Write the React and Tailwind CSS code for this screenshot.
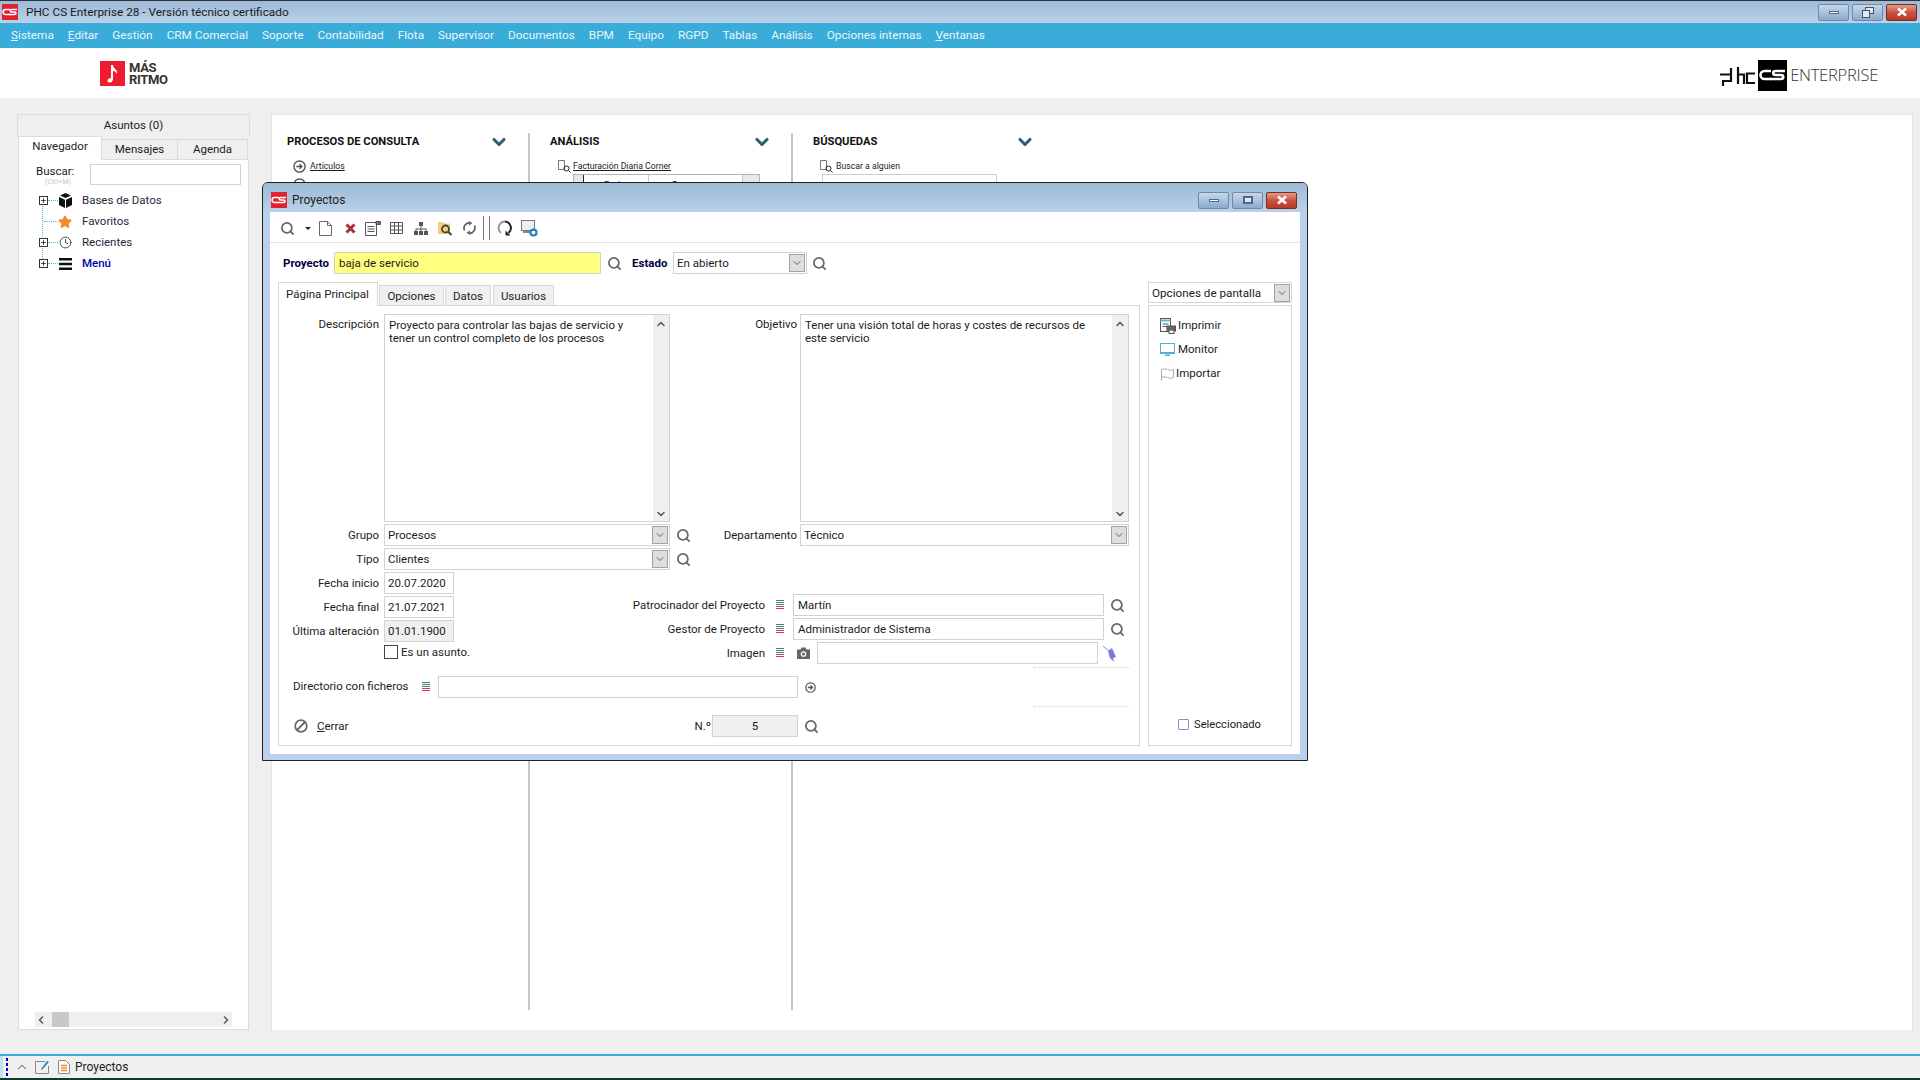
import { Star, Clock, Search, ChevronUp, ChevronDown, ChevronLeft, ChevronRight, Plus } from "lucide-react";

const menuItems = [
  ["S", "istema"],
  ["E", "ditar"],
  ["", "Gestión"],
  ["", "CRM Comercial"],
  ["", "Soporte"],
  ["", "Contabilidad"],
  ["", "Flota"],
  ["", "Supervisor"],
  ["", "Documentos"],
  ["", "BPM"],
  ["", "Equipo"],
  ["", "RGPD"],
  ["", "Tablas"],
  ["", "Análisis"],
  ["", "Opciones internas"],
  ["V", "entanas"],
];

const Lupa = () => <Search size={15} strokeWidth={2.8} color="#666666" className="shrink-0" />;

const CsLogo = ({ size = 16 }) => (
  <svg width={size} height={size} viewBox="0 0 16 16" className="shrink-0">
    <rect width="16" height="16" fill="#e2202e" />
    <path d="M8 5.5H3.6a2.4 2.4 0 0 0 0 5H8" fill="none" stroke="#fff" strokeWidth="1.6" />
    <path d="M15 5.5H9.6c-1.8 0-1.8 2.5 0 2.5h3c1.8 0 1.8 2.5 0 2.5H7" fill="none" stroke="#fff" strokeWidth="1.6" />
  </svg>
);

const ListaIcon = () => (
  <svg width="8" height="10" viewBox="0 0 8 10" className="shrink-0">
    <path d="M0 .5h8M0 2.5h8" stroke="#3d8a5f" />
    <path d="M0 4.5h8" stroke="#5a6fb0" />
    <path d="M0 6.5h8M0 8.5h8" stroke="#c8404e" />
  </svg>
);

const CircleArrow = ({ size = 13 }) => (
  <svg width={size} height={size} viewBox="0 0 14 14" className="shrink-0" fill="none" stroke="#555" strokeWidth="1.5">
    <circle cx="7" cy="7" r="6" />
    <path d="M3.5 7h6M7 4.5 9.5 7 7 9.5" strokeWidth="1.6" />
  </svg>
);

const WinButtons = ({ restore }) => (
  <div className="flex gap-[3px]">
    <div className="w-[31px] h-[17px] rounded-[2px] border border-[#7089a8] bg-gradient-to-b from-[#c6d8ea] via-[#a9c2dc] to-[#8ba9c9] flex items-center justify-center">
      <div className="w-[10px] h-[3px] bg-white border border-[#55677c]" />
    </div>
    <div className="w-[31px] h-[17px] rounded-[2px] border border-[#7089a8] bg-gradient-to-b from-[#c6d8ea] via-[#a9c2dc] to-[#8ba9c9] flex items-center justify-center">
      {restore ? (
        <svg width="12" height="11" viewBox="0 0 12 11" fill="none" stroke="#44546a">
          <rect x="3.5" y=".5" width="8" height="6" fill="#dfe8f2" />
          <rect x=".5" y="3.5" width="7" height="7" fill="#dfe8f2" />
        </svg>
      ) : (
        <div className="w-[10px] h-[8px] border-2 border-[#55677c] bg-white/60" />
      )}
    </div>
    <div className="w-[31px] h-[17px] rounded-[2px] border border-[#7a2a22] bg-gradient-to-b from-[#e29a8c] via-[#c9523f] to-[#b53a28] flex items-center justify-center">
      <svg width="12" height="10" viewBox="0 0 12 10">
        <path d="M2 1.5 10 8.5M10 1.5 2 8.5" stroke="#fff" strokeWidth="2.6" />
      </svg>
    </div>
  </div>
);

const ComboBtn = () => (
  <div className="w-[16px] h-[18px] shrink-0 bg-[#dedede] border border-[#a2a2a2] flex items-center justify-center">
    <ChevronDown size={12} strokeWidth={1.6} color="#444" />
  </div>
);

const Input = ({ className, children }) => (
  <div className={`h-[22px] border border-[#d2d2d2] flex items-center px-[3px] pt-[2px] text-[#1c1c1c] shrink-0 ${className}`}>
    {children}
  </div>
);

const Combo = ({ className, children }) => (
  <div className={`h-[22px] border border-[#d2d2d2] flex items-center justify-between pl-[3px] pr-[1px] shrink-0 ${className}`}>
    <span className="pt-[2px]">{children}</span>
    <ComboBtn />
  </div>
);

const Label = ({ className, children }) => (
  <div className={`flex justify-end whitespace-nowrap shrink-0 pt-[2px] ${className}`}>{children}</div>
);

const TextArea = ({ className, children }) => (
  <div className={`h-[208px] border border-[#d2d2d2] flex shrink-0 ${className}`}>
    <div className="flex-1 pl-[4px] pt-[4px] pr-[20px] leading-[13px] text-[11.5px]">{children}</div>
    <div className="w-[16px] bg-[#efefef] flex flex-col justify-between items-center pt-[3px] pb-[1px]">
      <ChevronUp size={12} strokeWidth={3} color="#555" />
      <ChevronDown size={12} strokeWidth={3} color="#555" />
    </div>
  </div>
);

function Toolbar() {
  return (
    <div className="h-[31px] border-b border-[#e3e3e3] flex items-center pl-[10px] pt-[2px] shrink-0">
      <Lupa />
      <div className="ml-[10px] w-0 h-0 border-x-[3px] border-x-transparent border-t-[3px] border-t-[#222]" />
      <svg width="13" height="15" viewBox="0 0 13 15" className="ml-[8px]" fill="none" stroke="#666">
        <path d="M.5.5h8l4 4v10H.5zM8.5.5v4h4" />
      </svg>
      <svg width="11" height="11" viewBox="0 0 11 11" className="ml-[13px]">
        <path d="M1.5 1.5 9.5 9.5M9.5 1.5 1.5 9.5" stroke="#a82f38" strokeWidth="3" />
      </svg>
      <svg width="16" height="15" viewBox="0 0 16 15" className="ml-[9px]" fill="none" stroke="#555">
        <path d="M11 .5h4.500v3H11z" fill="#777" />
        <path d="M.5 1.500h11v13H.5zM2.500 5.500h7M2.500 8h7M2.500 10.500h7" />
      </svg>
      <svg width="13" height="12" viewBox="0 0 13 12" className="ml-[9px]" fill="none" stroke="#555">
        <path d="M.5.5h12v11H.5zM.5 4h12M.5 8h12M4.500.5v11M8.500.5v11" />
      </svg>
      <svg width="14" height="13" viewBox="0 0 14 13" className="ml-[11px]" fill="#555">
        <rect x="5" y="0" width="4" height="4" />
        <rect x="0" y="9" width="4" height="4" />
        <rect x="5" y="9" width="4" height="4" />
        <rect x="10" y="9" width="4" height="4" />
        <path d="M6.500 4h1v2.500H12.500V9h-1V7.500h-4V9h-1V7.500h-4V9h-1V6.500h5z" />
      </svg>
      <svg width="15" height="15" viewBox="0 0 15 15" className="ml-[10px]" fill="none">
        <path d="M0 1h5l1 1.500h6V13H0z" fill="#f2cf7a" />
        <circle cx="7.500" cy="8" r="3.500" stroke="#444" strokeWidth="1.800" />
        <path d="m10 10.500 3.500 3.500" stroke="#444" strokeWidth="2" />
      </svg>
      <svg width="13" height="14" viewBox="0 0 13 14" className="ml-[10px]" fill="none" stroke="#666" strokeWidth="1.800">
        <path d="M1.500 9.500A5.500 5.500 0 0 1 7 1.800M11.500 4.500A5.500 5.500 0 0 1 6 12.200" />
        <path d="M6 0 9.500 2.200 6 4.500M7 9.500 3.500 11.800 7 14" fill="#666" stroke="none" />
      </svg>
      <div className="ml-[7px] w-[1px] h-[24px] bg-[#777]" />
      <div className="ml-[5px] w-[1px] h-[24px] bg-[#777]" />
      <svg width="16" height="16" viewBox="0 0 16 16" className="ml-[7px]" fill="none" strokeWidth="2">
        <path d="M4 13A6.500 6.500 0 0 1 8 1.500" stroke="#999" />
        <path d="M8 1.500A6.500 6.500 0 0 1 11.500 13" stroke="#222" />
        <path d="M8.500 10.500v5h5z" fill="#222" />
      </svg>
      <svg width="17" height="17" viewBox="0 0 17 17" className="ml-[8px]" fill="none">
        <rect x=".5" y=".5" width="13" height="10" stroke="#777" fill="#eee" />
        <rect x="2" y="11" width="8" height="2" fill="#888" />
        <circle cx="12.500" cy="12.500" r="3" stroke="#1f86b5" strokeWidth="2.200" />
      </svg>
    </div>
  );
}

function FormPanel() {
  return (
    <div className="h-[441px] border border-[#d8d8d8] flex flex-col pt-[8px]">
      <div className="h-[353px] flex shrink-0">
        {/* columna izquierda */}
        <div className="w-[441px] shrink-0 flex flex-col gap-[2px]">
          <div className="flex">
            <Label className="w-[100px] self-start">Descripción</Label>
            <TextArea className="ml-[5px] w-[286px]">
              Proyecto para controlar las bajas de servicio y tener un control completo de los procesos
            </TextArea>
          </div>
          <div className="flex items-center">
            <Label className="w-[100px]">Grupo</Label>
            <Combo className="ml-[5px] w-[286px]">Procesos</Combo>
            <div className="ml-[6px]"><Lupa /></div>
          </div>
          <div className="flex items-center">
            <Label className="w-[100px]">Tipo</Label>
            <Combo className="ml-[5px] w-[286px]">Clientes</Combo>
            <div className="ml-[6px]"><Lupa /></div>
          </div>
          <div className="flex items-center">
            <Label className="w-[100px]">Fecha inicio</Label>
            <Input className="ml-[5px] w-[70px]">20.07.2020</Input>
          </div>
          <div className="flex items-center">
            <Label className="w-[100px]">Fecha final</Label>
            <Input className="ml-[5px] w-[70px]">21.07.2021</Input>
          </div>
          <div className="flex items-center">
            <Label className="w-[100px]">Última alteración</Label>
            <Input className="ml-[5px] w-[70px] bg-[#f0f0f0]">01.01.1900</Input>
          </div>
          <div className="flex items-center ml-[105px] h-[16px]">
            <div className="w-[14px] h-[14px] border border-[#444] bg-white" />
            <span className="ml-[3px] pt-[2px]">Es un asunto.</span>
          </div>
        </div>
        {/* columna derecha */}
        <div className="w-[419px] shrink-0 flex flex-col">
          <div className="flex">
            <Label className="w-[77px] self-start">Objetivo</Label>
            <TextArea className="ml-[3px] w-[329px]">
              Tener una visión total de horas y costes de recursos de este servicio
            </TextArea>
          </div>
          <div className="flex items-center mt-[2px]">
            <Label className="w-[77px]">Departamento</Label>
            <Combo className="ml-[3px] w-[329px] pl-[2px]">Técnico</Combo>
          </div>
          <div className="flex items-center mt-[48px]">
            <Label className="w-[45px]">Patrocinador del Proyecto</Label>
            <div className="ml-[11px]"><ListaIcon /></div>
            <Input className="ml-[9px] w-[311px] pl-[4px]">Martín</Input>
            <div className="ml-[6px]"><Lupa /></div>
          </div>
          <div className="flex items-center mt-[2px]">
            <Label className="w-[45px]">Gestor de Proyecto</Label>
            <div className="ml-[11px]"><ListaIcon /></div>
            <Input className="ml-[9px] w-[311px] pl-[4px]">Administrador de Sistema</Input>
            <div className="ml-[6px]"><Lupa /></div>
          </div>
          <div className="flex items-center mt-[2px]">
            <Label className="w-[45px]">Imagen</Label>
            <div className="ml-[11px]"><ListaIcon /></div>
            <svg width="13" height="12" viewBox="0 0 13 12" className="ml-[13px] shrink-0">
              <path d="M0 2.500h3.500L4.500.5h4l1 2H13V12H0z" fill="#666" />
              <circle cx="6.500" cy="7" r="2.200" fill="none" stroke="#fff" strokeWidth="1.300" />
            </svg>
            <Input className="ml-[7px] w-[281px]" />
            <svg width="17" height="17" viewBox="0 0 17 17" className="ml-[4px] shrink-0">
              <path d="m1 1 7 6" stroke="#8f8fe0" />
              <path d="M6 6 10 3l4 9-3 1 1 4-4-4-1-3z" fill="#7a7ae0" />
            </svg>
          </div>
          <div className="mt-[3px] ml-[314px] w-[96px] border-t border-dotted border-[#d6d6d6]" />
        </div>
      </div>
      <div className="flex items-center mt-[9px] pl-[14px]">
        <span className="w-[117px] shrink-0 whitespace-nowrap">Directorio con ficheros</span>
        <div className="ml-[12px]"><ListaIcon /></div>
        <Input className="ml-[8px] w-[360px]" />
        <div className="ml-[7px]"><CircleArrow size={11} /></div>
      </div>
      <div className="mt-[8px] ml-[755px] w-[96px] border-t border-dotted border-[#d6d6d6]" />
      <div className="flex items-center mt-[8px] pl-[15px]">
        <div className="w-[400px] flex items-center shrink-0">
          <svg width="14" height="14" viewBox="0 0 14 14" fill="none" stroke="#666" strokeWidth="1.800">
            <circle cx="7" cy="7" r="5.800" />
            <path d="M3 11 11 3" />
          </svg>
          <span className="ml-[9px] pt-[2px]"><span className="underline">C</span>errar</span>
        </div>
        <Label className="w-[18px] pr-[1px]">N.º</Label>
        <Input className="w-[86px] bg-[#f0f0f0] justify-center">5</Input>
        <div className="ml-[6px]"><Lupa /></div>
      </div>
    </div>
  );
}

function ProyectosWindow() {
  return (
    <div className="absolute left-[262px] top-[182px] w-[1046px] h-[579px] border border-[#222] rounded-t-[6px] bg-[#b9d1ea] flex flex-col overflow-hidden">
      <div className="h-[29px] shrink-0 bg-gradient-to-b from-[#9cb9d7] to-[#bad1e8] flex items-center justify-between pt-[5px] pl-[8px] pr-[10px]">
        <div className="flex items-center gap-[5px]">
          <CsLogo />
          <span className="text-[12px] text-[#222]">Proyectos</span>
        </div>
        <WinButtons />
      </div>
      <div className="flex-1 mx-[7px] mb-[6px] bg-white flex flex-col">
        <Toolbar />
        <div className="flex items-center h-[22px] mt-[9px] shrink-0">
          <Label className="w-[59px] font-bold text-[#000040]">Proyecto</Label>
          <Input className="ml-[5px] w-[267px] bg-[#ffff80] pl-[4px]">baja de servicio</Input>
          <div className="ml-[6px]"><Lupa /></div>
          <span className="ml-[10px] pt-[2px] w-[36px] shrink-0 font-bold text-[#000040]">Estado</span>
          <Combo className="ml-[5px] w-[134px]">En abierto</Combo>
          <div className="ml-[5px]"><Lupa /></div>
        </div>
        <div className="flex mt-[8px] ml-[8px]">
          <div className="w-[862px] shrink-0">
            <div className="h-[23px] flex items-end relative top-[1px]">
              <div className="h-[24px] w-[100px] border border-b-0 border-[#d8d8d8] bg-white flex items-center pl-[7px] z-10">Página Principal</div>
              <div className="h-[21px] w-[65px] ml-[1px] border border-[#d8d8d8] bg-[#f0f0f0] flex items-center justify-center pt-[2px]">Opciones</div>
              <div className="h-[21px] w-[46px] ml-[1px] border border-[#d8d8d8] bg-[#f0f0f0] flex items-center justify-center pt-[2px]">Datos</div>
              <div className="h-[21px] w-[61px] ml-[2px] border border-[#d8d8d8] bg-[#f0f0f0] flex items-center justify-center pt-[2px]">Usuarios</div>
            </div>
            <FormPanel />
          </div>
          <div className="w-[144px] ml-[8px] shrink-0 flex flex-col">
            <div className="h-[21px] border border-[#d8d8d8] flex items-center justify-between pl-[3px] pr-[1px]">
              <span className="text-[11.7px] pt-[2px]">Opciones de pantalla</span>
              <ComboBtn />
            </div>
            <div className="h-[441px] mt-[2px] border border-[#d8d8d8] flex flex-col pt-[8px]">
              <div className="flex items-center h-[24px] pl-[11px] gap-[2px]">
                <svg width="16" height="16" viewBox="0 0 16 16" fill="none" stroke="#555">
                  <rect x=".5" y=".5" width="10" height="13" fill="#fff" />
                  <path d="M.5 2.500h10" stroke="#6fb4d6" strokeWidth="2" />
                  <path d="M2.500 6h6M2.500 8.500h6" />
                  <rect x="7" y="8" width="8.500" height="5" fill="#666" />
                  <rect x="9" y="12" width="5" height="3.500" fill="#fff" />
                </svg>
                <span>Imprimir</span>
              </div>
              <div className="flex items-center h-[24px] pl-[11px] gap-[3px]">
                <svg width="15" height="14" viewBox="0 0 15 14">
                  <rect x=".5" y=".5" width="14" height="10" fill="#fff" stroke="#55aed2" />
                  <path d="M1 9h13v2H1zM5 11.500h5V13H5z" fill="#55aed2" />
                </svg>
                <span>Monitor</span>
              </div>
              <div className="flex items-center h-[24px] pl-[11px] gap-[1px]">
                <svg width="15" height="13" viewBox="0 0 15 13" fill="none" stroke="#aaa">
                  <path d="M1.500 12.500V1.500q3-1.500 6 0t6 0v8q-3 1.500-6 0t-6 0" />
                </svg>
                <span>Importar</span>
              </div>
              <div className="mt-auto mb-[11px] flex items-center pl-[29px]">
                <div className="w-[11px] h-[11px] border border-[#8a8ad8] rounded-[1px]" />
                <span className="ml-[5px] pt-[2px] text-[11.2px]">Seleccionado</span>
              </div>
            </div>
          </div>
        </div>
      </div>
    </div>
  );
}

function LeftPanel() {
  return (
    <div className="w-[233px] ml-[17px] h-[916px] flex flex-col shrink-0">
      <div className="h-[22px] border border-b-0 border-[#dcdcdc] flex items-center justify-center shrink-0 pt-[1px]">Asuntos (0)</div>
      <div className="h-[23px] flex items-end shrink-0 pl-[1px] relative top-[1px] z-10">
        <div className="h-[24px] w-[84px] bg-white border border-b-0 border-[#dcdcdc] flex items-center justify-center pb-[3px]">Navegador</div>
        <div className="h-[21px] w-[76px] border-b border-t border-r border-[#dcdcdc] flex items-center justify-center">Mensajes</div>
        <div className="h-[21px] w-[70px] border-b border-t border-r border-[#dcdcdc] flex items-center justify-center">Agenda</div>
      </div>
      <div className="flex-1 ml-[1px] w-[231px] bg-white border border-[#dcdcdc] flex flex-col">
        <div className="flex pt-[4px] pl-[17px]">
          <div className="w-[54px] leading-[15px] font-normal">
            Buscar:
            <div className="text-[7px] leading-[7px] text-[#c4c4c4] ml-[9px] whitespace-nowrap">(Ctrl+M)</div>
          </div>
          <div className="w-[151px] h-[21px] border border-[#d2d2d2]" />
        </div>
        <div className="relative mt-[4px] pl-[20px]">
          <div className="absolute left-[23px] top-[10px] h-[63px] border-l border-dotted border-[#4cc3d9]" />
          {[
            [true, <svg key="a" width="13" height="15" viewBox="0 0 13 15" fill="#111"><path d="M6.500 0 12 2.500 6.500 5 1 2.500zM0 4l6 2.700V15L0 12zM13 4 7 6.700V15l6-3z" /></svg>, "Bases de Datos", false],
            [false, <Star key="b" size={14} fill="#f28c28" color="#f28c28" />, "Favoritos", false],
            [true, <Clock key="c" size={13} color="#222" strokeWidth={1.5} />, "Recientes", false],
            [true, <svg key="d" width="13" height="12" viewBox="0 0 13 12" fill="#111"><path d="M0 0h13v2.500H0zM0 4.700h13v2.500H0zM0 9.500h13V12H0z" /></svg>, "Menú", true],
          ].map(([plus, icon, label, blue]) => (
            <div key={label} className="flex items-center h-[21px] relative">
              <div className="w-[8px] h-[8px] flex items-center justify-center">
                {plus && (
                  <div className="w-[9px] h-[9px] border border-[#333] bg-white flex items-center justify-center shrink-0">
                    <Plus size={7} strokeWidth={2.5} color="#111" />
                  </div>
                )}
              </div>
              <div className={`border-t border-dotted border-[#4cc3d9] ${plus ? "ml-[1px] w-[10px]" : "ml-[-3px] w-[14px]"}`} />
              <div className="w-[14px] flex justify-center shrink-0">{icon}</div>
              <span className={`ml-[10px] ${blue ? "text-[#0000a8] font-medium" : "text-[#1c2c3c]"}`}>{label}</span>
            </div>
          ))}
        </div>
        <div className="mt-auto mb-[2px] mx-[16px] h-[15px] bg-[#efefef] flex items-center justify-between relative">
          <ChevronLeft size={12} strokeWidth={3} color="#555" />
          <div className="absolute left-[17px] top-0 w-[17px] h-[15px] bg-[#c8c8c8]" />
          <ChevronRight size={12} strokeWidth={3} color="#555" />
        </div>
      </div>
    </div>
  );
}

const DocLupa = () => (
  <svg width="13" height="13" viewBox="0 0 13 13" fill="none" stroke="#777" className="shrink-0">
    <path d="M.5.5h6v9H.5z" />
    <circle cx="8.500" cy="8.500" r="2.500" stroke="#222" />
    <path d="m10.500 10.500 2 2" stroke="#222" />
  </svg>
);

function MainPanel() {
  return (
    <div className="ml-[21px] w-[1642px] h-[916px] bg-white border-t border-l border-r border-[#e4e4e4] flex pt-[18px] shrink-0">
      <div className="w-[258px] h-[877px] border-r-2 border-[#c6c6c6] pl-[15px] pr-[19px] shrink-0">
        <div className="flex justify-between items-center h-[18px] font-bold text-[11.2px] text-[#111]">
          PROCESOS DE CONSULTA
          <ChevronDown size={20} strokeWidth={3.8} color="#2f5f75" />
        </div>
        <div className="flex items-center mt-[9px] ml-[6px]">
          <CircleArrow />
          <span className="ml-[4px] text-[8.7px] underline">Artículos</span>
        </div>
        <div className="mt-[5px] ml-[6px]"><CircleArrow /></div>
      </div>
      <div className="w-[263px] h-[877px] border-r-2 border-[#c6c6c6] pl-[20px] pr-[19px] shrink-0">
        <div className="flex justify-between items-center h-[18px] font-bold text-[11.2px] text-[#111]">
          ANÁLISIS
          <ChevronDown size={20} strokeWidth={3.8} color="#2f5f75" />
        </div>
        <div className="flex items-center mt-[9px] ml-[8px]">
          <DocLupa />
          <span className="ml-[2px] text-[8.7px] underline">Facturación Diaria Corner</span>
        </div>
        <div className="mt-[1px] ml-[23px] w-[187px] h-[20px] border border-[#b4b4b4] flex text-[9px] pt-0">
          <div className="w-[10px] bg-[#e8e8e8] border-r border-[#222]" />
          <div className="w-[65px] border-r border-[#c8c8c8] text-center pt-[4px]">Fecha</div>
          <div className="w-[94px] border-r border-[#c8c8c8] text-center pt-[4px]">Documento</div>
          <div className="flex-1 bg-[#e8e8e8]" />
        </div>
      </div>
      <div className="w-[263px] h-[877px] pl-[20px] pr-[21px] shrink-0">
        <div className="flex justify-between items-center h-[18px] font-bold text-[11.2px] text-[#111]">
          BÚSQUEDAS
          <ChevronDown size={20} strokeWidth={3.8} color="#2f5f75" />
        </div>
        <div className="flex items-center mt-[9px] ml-[7px]">
          <DocLupa />
          <span className="ml-[3px] text-[8.7px]">Buscar a alguien</span>
        </div>
        <div className="mt-[1px] ml-[9px] w-[175px] h-[20px] border border-[#ccc]" />
      </div>
    </div>
  );
}

export default function App() {
  return (
    <div className="w-[1920px] h-[1080px] relative overflow-hidden flex flex-col bg-[#efefef] font-['Roboto',sans-serif] text-[11.5px] text-[#1c1c1c]">
      {/* barra de titulo */}
      <div className="h-[23px] shrink-0 border-t border-[#333] bg-gradient-to-b from-[#9cb9d7] to-[#bad1e8] flex items-center justify-between pl-[2px] pr-[3px]">
        <div className="flex items-center gap-[8px]">
          <CsLogo />
          <span className="text-[11.8px] text-[#1a1a1a] pt-[1px]">PHC CS Enterprise 28 - Versión técnico certificado</span>
        </div>
        <WinButtons restore />
      </div>
      {/* menu */}
      <div className="h-[25px] shrink-0 bg-[#3aacd9] flex items-center gap-[14px] pl-[11px] pt-[1px] text-[11.8px] text-[#e9f6fb]">
        {menuItems.map(([u, rest]) => (
          <span key={rest}>
            {u && <span className="underline">{u}</span>}
            {rest}
          </span>
        ))}
      </div>
      {/* logos */}
      <div className="h-[50px] shrink-0 bg-white flex items-center justify-between pl-[100px] pr-[42px]">
        <div className="flex items-center pt-[1px]">
          <svg width="25" height="25" viewBox="0 0 25 25">
            <rect width="25" height="25" fill="#ee1c2e" />
            <path d="M11 4h2c0 4 5 4 4 9-1-2-2-3-4-3v8c0 2-2 4-4 3.500s-2-3 0-4q1-.6 2-.2z" fill="#fff" />
          </svg>
          <div className="ml-[4px] font-bold text-[13px] leading-[12px] text-[#333] tracking-tight">
            <div>MÁS</div>
            <div>RITMO</div>
          </div>
        </div>
        <div className="flex items-center pt-[5px]">
          <svg width="35" height="24" viewBox="0 0 35 24" fill="none" stroke="#111" strokeWidth="2.200" className="mr-[3px]">
            <path d="M0 10.500H11V17H3V22M11 10.500V4M18 3V20M18 10.500H24V20M35 9.500H27V19H35" />
          </svg>
          <svg width="29" height="31" viewBox="0 0 29 31">
            <rect width="29" height="31" fill="#000" />
            <path d="M13 11H6.500a3.500 3.500 0 0 0 0 8H13" fill="none" stroke="#fff" strokeWidth="2.600" />
            <path d="M27 11H17.500c-3 0-3 4 0 4h5.500c3 0 3 4 0 4H12" fill="none" stroke="#fff" strokeWidth="2.600" />
          </svg>
          <span className="ml-[3px] text-[16.6px] tracking-[-0.3px] text-[#333] font-['Open_Sans',sans-serif] font-light">ENTERPRISE</span>
        </div>
      </div>
      {/* cuerpo */}
      <div className="flex-1 flex pt-[16px]">
        <LeftPanel />
        <MainPanel />
      </div>
      {/* barra inferior */}
      <div className="h-[26px] shrink-0 border-t-2 border-t-[#3aacd9] border-b-2 border-b-[#0e3b2e] bg-[#f0f0f0] flex items-center">
        <div className="w-[3px] h-full bg-[#bfe3f2]" />
        <div className="ml-[3px] flex flex-col gap-[2px]">
          <div className="w-[2px] h-[3px] bg-[#0000c0]" />
          <div className="w-[2px] h-[3px] bg-[#0000c0]" />
          <div className="w-[2px] h-[3px] bg-[#0000c0]" />
          <div className="w-[2px] h-[3px] bg-[#0000c0]" />
        </div>
        <ChevronUp size={14} strokeWidth={1.800} color="#666" className="ml-[7px]" />
        <svg width="16" height="14" viewBox="0 0 16 14" fill="none" className="ml-[6px]">
          <path d="M10 1.500H.5v12h13V6" stroke="#888" />
          <path d="m6 9 1 1 7-8-2-1z" fill="#2a8fb5" />
        </svg>
        <svg width="12" height="14" viewBox="0 0 12 14" fill="none" className="ml-[7px]">
          <path d="M.5.5h7l4 4v9H.5z" stroke="#888" fill="#fff" />
          <path d="M3 5.500h6M3 8h6M3 10.500h6" stroke="#f28c28" strokeWidth="1.300" />
        </svg>
        <span className="ml-[5px] text-[12px]">Proyectos</span>
      </div>
      <ProyectosWindow />
    </div>
  );
}
